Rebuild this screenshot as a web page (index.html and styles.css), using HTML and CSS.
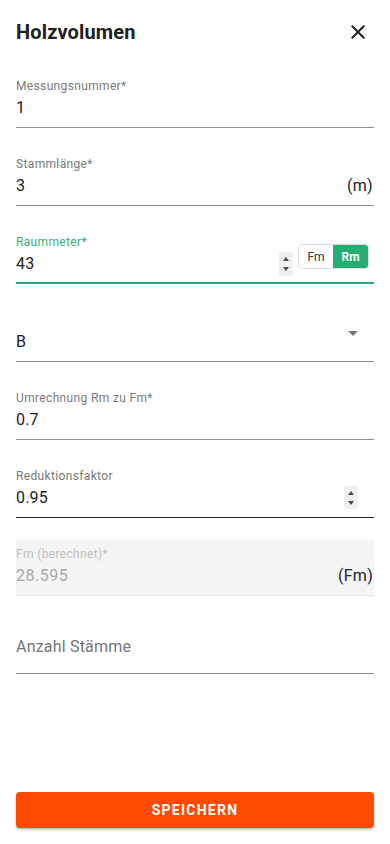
FILE: index.html
```html
<!DOCTYPE html>
<html lang="de">
<head>
<meta charset="utf-8">
<meta name="viewport" content="width=device-width, initial-scale=1">
<title>Holzvolumen</title>
<link rel="stylesheet" href="styles.css">
</head>
<body>
<div class="dialog">
  <header class="head">
    <h1 class="title">Holzvolumen</h1>
    <button class="close" aria-label="Schließen">
      <svg viewBox="0 0 24 24" width="24" height="24"><path d="M19 6.41 17.59 5 12 10.59 6.41 5 5 6.41 10.59 12 5 17.59 6.41 19 12 13.41 17.59 19 19 17.59 13.41 12z" fill="#212121"/></svg>
    </button>
  </header>

  <div class="fields">
    <div class="field">
      <div class="label">Messungsnummer*</div>
      <div class="row"><span class="value">1</span></div>
    </div>

    <div class="field">
      <div class="label">Stammlänge*</div>
      <div class="row"><span class="value">3</span><span class="suffix">(m)</span></div>
    </div>

    <div class="field focused">
      <div class="label">Raummeter*</div>
      <div class="row">
        <span class="value">43</span>
        <span class="spin"><i class="up"></i><i class="down"></i></span>
        <div class="toggle">
          <span class="opt">Fm</span>
          <span class="opt on">Rm</span>
        </div>
      </div>
    </div>

    <div class="field select">
      <div class="label"></div>
      <div class="row"><span class="value">B</span></div>
      <svg class="arrow" viewBox="0 0 24 24" width="24" height="24"><path d="M7 10l5 5 5-5z" fill="#757575"/></svg>
    </div>

    <div class="field">
      <div class="label">Umrechnung Rm zu Fm*</div>
      <div class="row"><span class="value">0.7</span></div>
    </div>

    <div class="field hover">
      <div class="label">Reduktionsfaktor</div>
      <div class="row">
        <span class="value">0.95</span>
        <span class="spin end"><i class="up"></i><i class="down"></i></span>
      </div>
    </div>

    <div class="field disabled">
      <div class="label">Fm (berechnet)*</div>
      <div class="row"><span class="value">28.595</span><span class="suffix">(Fm)</span></div>
    </div>

    <div class="field empty">
      <div class="placeholder">Anzahl Stämme</div>
    </div>
  </div>

  <button class="save">SPEICHERN</button>
</div>
</body>
</html>
```
FILE: styles.css
```css
* { box-sizing: border-box; }
html, body { margin: 0; padding: 0; background: #fff; }
body {
  font-family: Roboto, "Noto Sans", "Liberation Sans", sans-serif;
  color: #212121;
}
.dialog {
  height: 844px;
  padding: 20px 16px 16px;
  display: flex;
  flex-direction: column;
}
.head {
  display: flex;
  align-items: center;
  justify-content: space-between;
  height: 24px;
}
.title {
  margin: 0;
  font-size: 20px;
  line-height: 24px;
  font-weight: 700;
  letter-spacing: 0.15px;
  color: #212121;
}
.close {
  border: 0;
  background: none;
  padding: 0;
  width: 24px;
  height: 24px;
  margin-right: 4px;
  display: block;
}
.close svg { display: block; }

.fields {
  margin-top: 28px;
  display: flex;
  flex-direction: column;
  gap: 22px;
}
.field {
  position: relative;
  padding-top: 6px;
  border-bottom: 1px solid #8c8c8c;
  height: 56px;
}
.label {
  font-size: 12px;
  line-height: 16px;
  height: 16px;
  color: #7a7a7a;
  letter-spacing: 0.35px;
  margin-bottom: 2px;
}
.row {
  display: flex;
  align-items: flex-start;
  height: 24px;
}
.value {
  flex: 1;
  font-size: 16px;
  line-height: 24px;
  color: #212121;
  letter-spacing: 0.15px;
}
.suffix {
  font-size: 16px;
  line-height: 24px;
  color: #212121;
  letter-spacing: 0.3px;
  margin-right: 1px;
}

.focused { border-bottom: 2px solid #26a96e; }
.focused .label { color: #3aae7b; }
.hover { border-bottom-color: #212121; }

.spin {
  width: 14px;
  height: 24px;
  background: #efefef;
  border-radius: 2px;
  display: flex;
  flex-direction: column;
  align-items: center;
  justify-content: center;
  gap: 6px;
}
.spin.end { margin-right: 16px; margin-top: 0; height: 23px; }
.spin i { display: block; width: 0; height: 0; border-left: 3px solid transparent; border-right: 3px solid transparent; }
.spin .up { border-bottom: 4px solid #4a4a4a; }
.spin .down { border-top: 4px solid #4a4a4a; }

.toggle {
  margin-top: -8px;
  margin-left: 5px;
  margin-right: 5px;
  display: flex;
  height: 25px;
  border: 1px solid #dedede;
  border-radius: 4px;
  overflow: hidden;
}
.opt {
  width: 34px;
  display: flex;
  align-items: center;
  justify-content: center;
  font-size: 12px;
  color: #333;
  background: #fff;
}
.opt.on {
  width: 35px;
  background: #25ad72;
  color: #fff;
  font-weight: 700;
}

.arrow {
  position: absolute;
  right: 9px;
  top: 15px;
}

.disabled {
  background: #f5f5f5;
  border-bottom-color: #e3e3e3;
}
.disabled .label { color: #bdbdbd; }
.disabled .value { color: #a8a8a8; letter-spacing: 0.5px; }

.empty .placeholder {
  margin-top: 11px;
  font-size: 16px;
  line-height: 24px;
  color: #757575;
  letter-spacing: 0.2px;
}

.save {
  margin-top: auto;
  height: 36px;
  width: 100%;
  border: 0;
  border-radius: 4px;
  background: #ff4a00;
  color: #fff;
  font-family: Roboto, "Noto Sans", "Liberation Sans", sans-serif;
  font-size: 14px;
  font-weight: 700;
  letter-spacing: 1.25px;
  box-shadow: 0 2px 3px rgba(0,0,0,0.18), 0 1px 1px rgba(0,0,0,0.1);
}
```
